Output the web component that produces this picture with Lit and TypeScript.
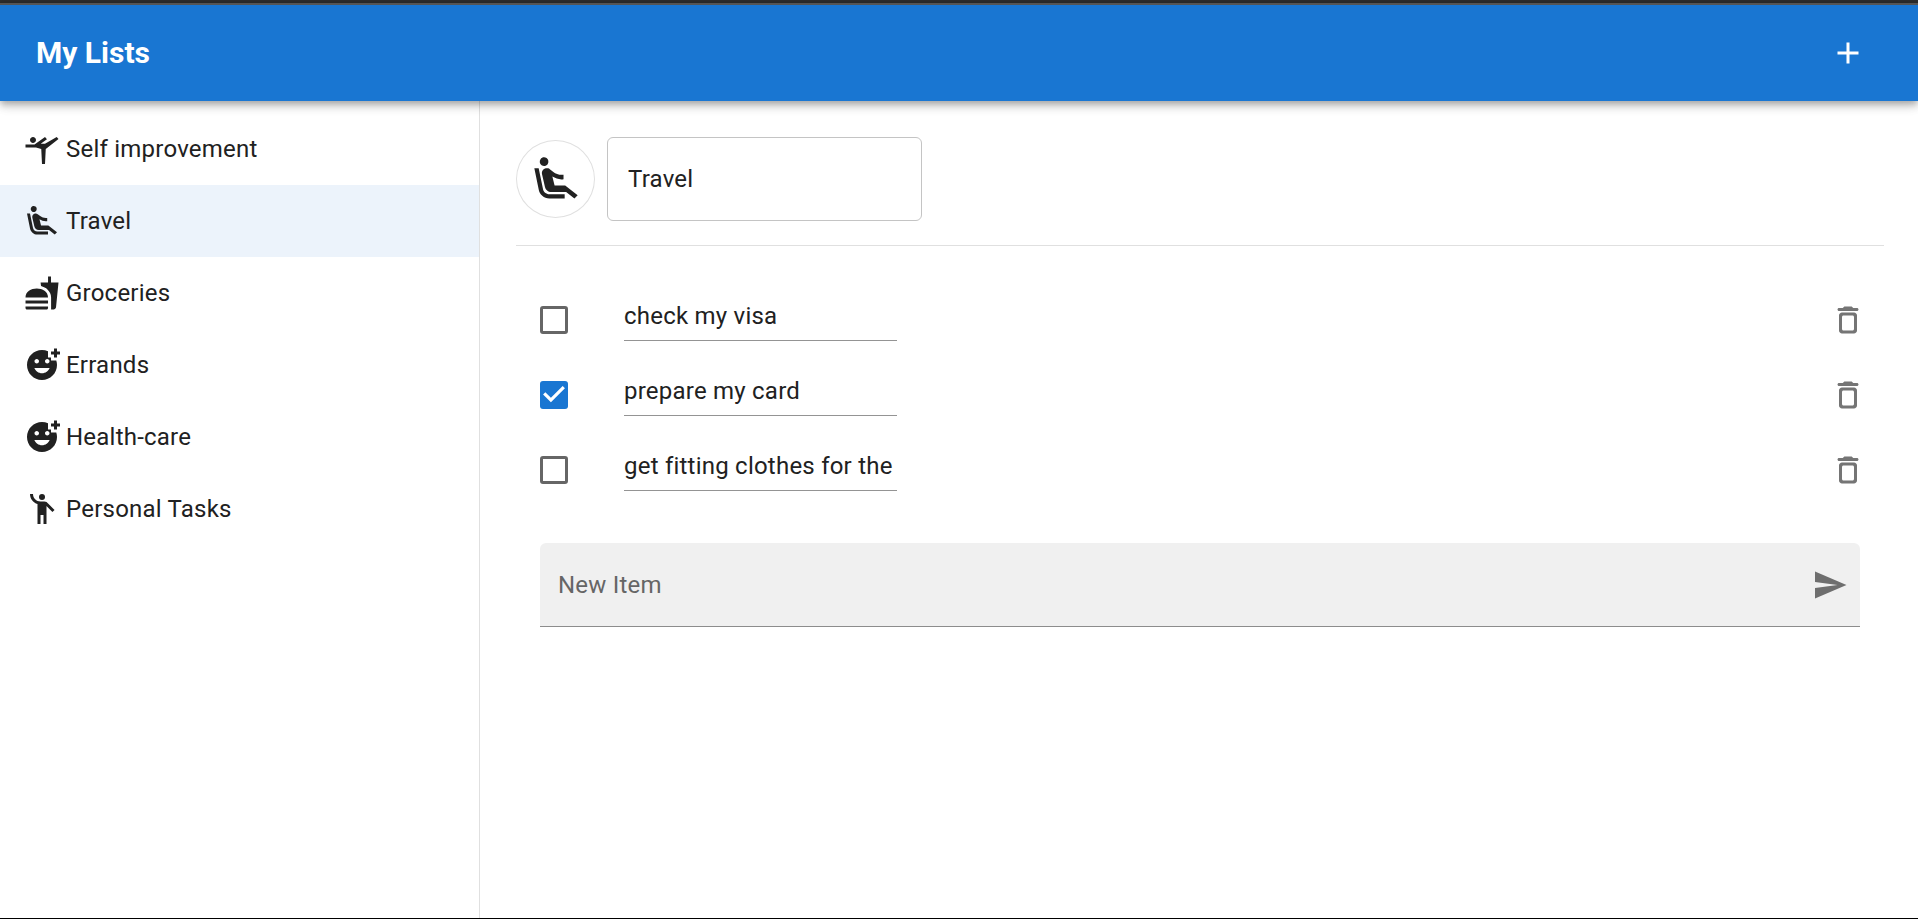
import { LitElement, html, css, svg } from "lit";
import { customElement, property, state } from "lit/decorators.js";
import { classMap } from "lit/directives/class-map.js";

const ICONS = {
  gymnastics: svg`<path d="M4 6c0-1.1.9-2 2-2s2 .9 2 2-.9 2-2 2-2-.9-2-2zM1 9h6l7-5 1.31 1.52L11.14 8.5H14L21.8 4 23 5.4 14.5 12 14 22h-2l-.5-10L8 11H1V9z"/>`,
  seat: svg`<path d="M5.35 5.64c-.9-.64-1.12-1.88-.49-2.79.63-.9 1.88-1.12 2.79-.49.9.64 1.12 1.88.49 2.79-.64.9-1.88 1.12-2.79.49zM16 19H8.93c-1.48 0-2.74-1.08-2.96-2.54L4 7H2l1.99 9.76C4.37 19.2 6.47 21 8.94 21H16v-2zm.23-4h-4.88l-1.03-4.1c1.58.89 3.28 1.54 5.15 1.22V9.99c-1.63.31-3.44-.27-4.69-1.25L9.14 7.47c-.23-.18-.49-.3-.76-.38-.32-.09-.66-.12-.99-.06h-.02c-1.23.22-2.05 1.39-1.84 2.61l1.35 5.92C7.16 16.98 8.39 18 9.83 18h6.85l3.82 3 1.5-1.5-5.77-4.5z"/>`,
  fastfood: svg`<path d="M18.06 22.99h1.66c.84 0 1.53-.64 1.63-1.46L23 5.05h-5V1h-1.97v4.05h-4.97l.3 2.34c1.71.47 3.31 1.32 4.27 2.26 1.44 1.42 2.43 2.89 2.43 5.29v8.05zM1 21.99V21h15.03v.99c0 .55-.45 1-1.01 1H2.01c-.56 0-1.01-.45-1.01-1zm15.03-7c0-8-15.03-8-15.03 0h15.03zM1.02 17h15v2h-15z"/>`,
  reaction: svg`<path d="M18 9V7h-2V2.84C14.77 2.3 13.42 2 11.99 2 6.47 2 2 6.48 2 12s4.47 10 9.99 10C17.52 22 22 17.52 22 12c0-1.05-.17-2.05-.47-3H18zm-2.5-1c.83 0 1.5.67 1.5 1.5s-.67 1.5-1.5 1.5-1.5-.67-1.5-1.5.67-1.5 1.5-1.5zm-7 0c.83 0 1.5.67 1.5 1.5S9.33 11 8.5 11 7 10.33 7 9.5 7.67 8 8.5 8zm3.5 9.5c-2.33 0-4.31-1.46-5.11-3.5h10.22c-.8 2.04-2.78 3.5-5.11 3.5zM22 3h2v2h-2v2h-2V5h-2V3h2V1h2v2z"/>`,
  people: svg`<circle cx="12" cy="4" r="2"/><path d="M15.89 8.11C15.5 7.72 14.83 7 13.53 7h-2.54C8.24 6.99 6 4.75 6 2H4c0 3.16 2.11 5.84 5 6.71V22h2v-6h2v6h2V10.05L18.95 14l1.41-1.41-4.47-4.48z"/>`,
  add: svg`<path d="M19 13h-6v6h-2v-6H5v-2h6V5h2v6h6v2z"/>`,
  trash: svg`<path d="M6 19c0 1.1.9 2 2 2h8c1.1 0 2-.9 2-2V9c0-1.1-.9-2-2-2H8c-1.1 0-2 .9-2 2v10zM9 9h6c.55 0 1 .45 1 1v8c0 .55-.45 1-1 1H9c-.55 0-1-.45-1-1v-8c0-.55.45-1 1-1zm6.5-5-.71-.71c-.18-.18-.44-.29-.7-.29H9.91c-.26 0-.52.11-.7.29L8.5 4H6c-.55 0-1 .45-1 1s.45 1 1 1h12c.55 0 1-.45 1-1s-.45-1-1-1h-2.5z"/>`,
  send: svg`<path d="M2.01 21 23 12 2.01 3 2 10l15 2-15 2z"/>`,
};

type IconName = keyof typeof ICONS;

interface TodoItem {
  id: number;
  name: string;
  checked: boolean;
}

interface TodoList {
  id: number;
  name: string;
  icon: IconName;
  items: TodoItem[];
}

@customElement("md-icon")
class MdIcon extends LitElement {
  @property() name: IconName = "add";

  static styles = css`
    :host {
      display: block;
      flex: none;
      width: 36px;
      height: 36px;
    }
    .glyph {
      display: block;
      width: 100%;
      height: 100%;
      fill: currentColor;
    }
  `;

  render() {
    return html`<svg class="glyph" viewBox="0 0 24 24" aria-hidden="true">${ICONS[this.name]}</svg>`;
  }
}

@customElement("app-root")
class AppRoot extends LitElement {
  @state() private lists: TodoList[] = [
    { id: 1, name: "Self improvement", icon: "gymnastics", items: [] },
    {
      id: 2,
      name: "Travel",
      icon: "seat",
      items: [
        { id: 1, name: "check my visa", checked: false },
        { id: 2, name: "prepare my card", checked: true },
        { id: 3, name: "get fitting clothes for the trip", checked: false },
      ],
    },
    { id: 3, name: "Groceries", icon: "fastfood", items: [] },
    { id: 4, name: "Errands", icon: "reaction", items: [] },
    { id: 5, name: "Health-care", icon: "reaction", items: [] },
    { id: 6, name: "Personal Tasks", icon: "people", items: [] },
  ];
  @state() private currentId = 2;
  @state() private draft = "";

  static styles = css`
    :host {
      display: flex;
      flex-direction: column;
      box-sizing: border-box;
      min-height: 100vh;
      border-top: 3px solid #2d2d2d;
      border-bottom: 1px solid #000;
      background: #fff;
      color: #212121;
      font: 400 24px/36px Roboto, "Liberation Sans", sans-serif;
      letter-spacing: 0.00938em;
    }
    *,
    *::after {
      box-sizing: border-box;
    }
    button,
    input {
      margin: 0;
      padding: 0;
      border: 0;
      border-radius: 0;
      background: none;
      color: inherit;
      font: inherit;
      letter-spacing: inherit;
      outline: none;
    }
    button {
      cursor: pointer;
    }
    .bar {
      position: relative;
      z-index: 1;
      display: flex;
      align-items: center;
      justify-content: space-between;
      height: 98px;
      padding: 0 52px 0 36px;
      border-top: 2px solid #555;
      background: #1976d2;
      color: #fff;
      box-shadow: 0 3px 6px -1px rgba(0, 0, 0, 0.2),
        0 6px 8px 0 rgba(0, 0, 0, 0.14), 0 1px 15px 0 rgba(0, 0, 0, 0.12);
    }
    .title {
      margin: 0;
      font-size: 30px;
      line-height: 48px;
      font-weight: 700;
      letter-spacing: normal;
    }
    .body {
      display: flex;
      flex: 1;
    }
    .side {
      flex: none;
      width: 480px;
      padding-top: 12px;
      border-right: 1px solid #e0e0e0;
    }
    .lists,
    .items {
      margin: 0;
      padding: 0;
      list-style: none;
    }
    .entry {
      display: flex;
      align-items: center;
      gap: 6px;
      width: 100%;
      height: 72px;
      padding: 0 24px;
      text-align: left;
    }
    .entry:hover {
      background: rgba(0, 0, 0, 0.04);
    }
    .entry.selected {
      background: #ecf3fb;
    }
    .main {
      flex: 1;
      min-width: 0;
      padding: 36px 34px 36px 36px;
    }
    .head {
      display: flex;
      align-items: center;
      gap: 12px;
      padding-bottom: 24px;
      border-bottom: 1px solid #e0e0e0;
    }
    .avatar {
      display: grid;
      place-items: center;
      width: 79px;
      height: 78px;
      border: 1px solid #e0e0e0;
      border-radius: 50%;
    }
    .avatar md-icon {
      width: 52px;
      height: 52px;
    }
    .name {
      width: 315px;
      height: 84px;
      padding: 0 20px;
      border: 1px solid #c4c4c4;
      border-radius: 6px;
    }
    .name:focus {
      border-color: #1976d2;
    }
    .content {
      display: flex;
      flex-direction: column;
      gap: 36px;
      padding: 36px 24px;
    }
    .item {
      display: flex;
      align-items: center;
      height: 75px;
    }
    .tick {
      flex: none;
      display: block;
      appearance: none;
      width: 28px;
      height: 28px;
      margin-right: 56px;
      border: 3px solid #666;
      border-radius: 3px;
      cursor: pointer;
    }
    .tick:checked {
      border: 0;
      background: #1976d2;
    }
    .tick:checked::after {
      content: "";
      display: block;
      height: 100%;
      background: #fff;
      clip-path: polygon(39% 78%, 11% 50%, 19% 42%, 39% 62%, 81% 20%, 89% 28%);
    }
    .text {
      width: 273px;
      height: 48px;
      margin-bottom: 6px;
      border-bottom: 1px solid #949494;
    }
    .remove {
      margin-left: auto;
      margin-right: -6px;
      color: #757575;
    }
    .composer {
      display: flex;
      align-items: center;
      height: 84px;
      padding: 0 12px 0 18px;
      border-bottom: 1px solid #8c8c8c;
      border-radius: 6px 6px 0 0;
      background: #f0f0f0;
    }
    .draft {
      flex: 1;
      min-width: 0;
      height: 100%;
    }
    .draft::placeholder {
      color: #666;
      opacity: 1;
    }
    .submit {
      color: #6e6e6e;
    }
  `;

  private get current(): TodoList {
    return this.lists.find((l) => l.id === this.currentId) ?? this.lists[0];
  }

  private patchCurrent(patch: Partial<TodoList>) {
    const id = this.current.id;
    this.lists = this.lists.map((l) => (l.id === id ? { ...l, ...patch } : l));
  }

  private patchItem(id: number, patch: Partial<TodoItem>) {
    this.patchCurrent({
      items: this.current.items.map((i) => (i.id === id ? { ...i, ...patch } : i)),
    });
  }

  private removeItem(id: number) {
    this.patchCurrent({ items: this.current.items.filter((i) => i.id !== id) });
  }

  private addList() {
    const id = Math.max(...this.lists.map((l) => l.id)) + 1;
    this.lists = [...this.lists, { id, name: "New List", icon: "reaction", items: [] }];
    this.currentId = id;
  }

  private addItem(e: Event) {
    e.preventDefault();
    const name = this.draft.trim();
    if (!name) return;
    const id = Math.max(0, ...this.current.items.map((i) => i.id)) + 1;
    this.patchCurrent({ items: [...this.current.items, { id, name, checked: false }] });
    this.draft = "";
  }

  private valueOf(e: Event) {
    return (e.target as HTMLInputElement).value;
  }

  private renderItem(item: TodoItem) {
    return html`
      <li class="item">
        <input
          class="tick"
          type="checkbox"
          aria-label="Done: ${item.name}"
          .checked=${item.checked}
          @change=${() => this.patchItem(item.id, { checked: !item.checked })}
        />
        <input
          class="text"
          type="text"
          aria-label="Item name"
          .value=${item.name}
          @input=${(e: Event) => this.patchItem(item.id, { name: this.valueOf(e) })}
        />
        <button class="remove" aria-label="Delete ${item.name}" @click=${() => this.removeItem(item.id)}>
          <md-icon name="trash"></md-icon>
        </button>
      </li>
    `;
  }

  render() {
    const list = this.current;
    return html`
      <header class="bar">
        <h1 class="title">My Lists</h1>
        <button aria-label="Add list" @click=${this.addList}><md-icon name="add"></md-icon></button>
      </header>
      <div class="body">
        <nav class="side" aria-label="Lists">
          <ul class="lists">
            ${this.lists.map(
              (l) => html`
                <li>
                  <button
                    class=${classMap({ entry: true, selected: l.id === list.id })}
                    aria-current=${l.id === list.id ? "true" : "false"}
                    @click=${() => (this.currentId = l.id)}
                  >
                    <md-icon name=${l.icon}></md-icon>
                    <span>${l.name}</span>
                  </button>
                </li>
              `
            )}
          </ul>
        </nav>
        <main class="main">
          <div class="head">
            <button class="avatar" aria-label="Change icon"><md-icon name=${list.icon}></md-icon></button>
            <input
              class="name"
              type="text"
              aria-label="List name"
              .value=${list.name}
              @input=${(e: Event) => this.patchCurrent({ name: this.valueOf(e) })}
            />
          </div>
          <div class="content">
            <ul class="items">
              ${list.items.map((i) => this.renderItem(i))}
            </ul>
            <form class="composer" @submit=${this.addItem}>
              <input
                class="draft"
                type="text"
                aria-label="New Item"
                placeholder="New Item"
                .value=${this.draft}
                @input=${(e: Event) => (this.draft = this.valueOf(e))}
              />
              <button class="submit" type="submit" aria-label="Add item"><md-icon name="send"></md-icon></button>
            </form>
          </div>
        </main>
      </div>
    `;
  }
}
